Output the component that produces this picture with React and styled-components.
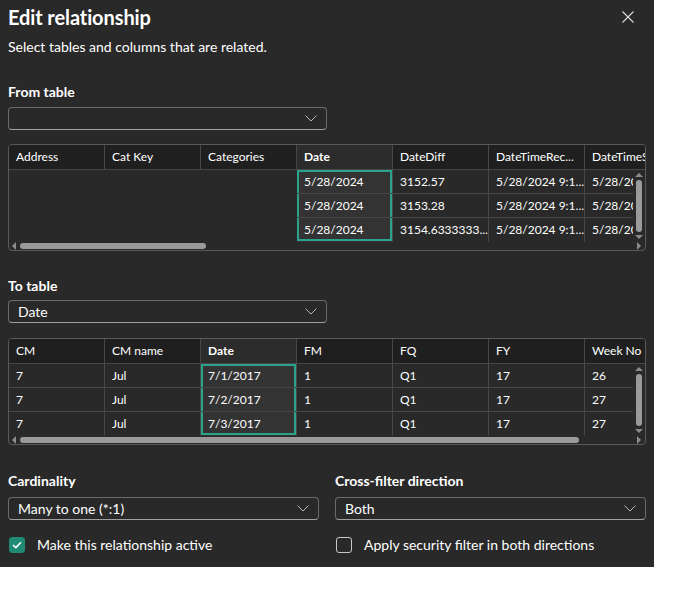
import React from "react";
import styled, { createGlobalStyle } from "styled-components";

const GlobalStyle = createGlobalStyle`
  body {
    margin: 0;
    background: #ffffff;
  }
`;

const TEAL = "#2aa38c";
const GRID = "#474747";

const Dialog = styled.div`
  width: 654px;
  height: 567px;
  box-sizing: border-box;
  padding: 0 8px 0 8px;
  background: #292929;
  color: #ffffff;
  font-family: "Lato", "Liberation Sans", sans-serif;
  display: flex;
  flex-direction: column;
`;

const TitleBar = styled.div`
  display: flex;
  justify-content: space-between;
  align-items: center;
  height: 34px;
`;

const Title = styled.h1`
  margin: 0;
  font-size: 20px;
  font-weight: 700;
  letter-spacing: -0.1px;
`;

const CloseButton = styled.button`
  width: 24px;
  height: 24px;
  margin-right: 6px;
  padding: 0;
  border: none;
  background: transparent;
  display: flex;
  align-items: center;
  justify-content: center;
`;

const Subtitle = styled.p`
  margin: 3px 0 0;
  font-size: 14px;
  line-height: 20px;
`;

const Label = styled.div`
  margin-top: ${(p) => p.$top || 0}px;
  font-size: 14px;
  line-height: 20px;
  font-weight: 700;
`;

const Select = styled.div`
  width: ${(p) => p.$width || 311}px;
  height: 23px;
  box-sizing: border-box;
  margin-top: ${(p) => p.$top || 5}px;
  padding: 0 9px;
  border: 1px solid #6a6a6a;
  border-bottom-color: #a0a0a0;
  border-radius: 4px;
  display: flex;
  align-items: center;
  justify-content: space-between;
  font-size: 14px;
`;

const TableFrame = styled.div`
  margin-top: ${(p) => p.$top || 15}px;
  width: 638px;
  box-sizing: border-box;
  border: 1px solid #5a5a5a;
  border-radius: 4px;
  overflow: hidden;
  display: grid;
  grid-template-columns: 1fr 12px;
  grid-template-rows: 25px 72px 8px;
  font-size: 12px;
`;

const HeaderRow = styled.div`
  grid-column: 1 / 3;
  display: flex;
  background: #1f1f1f;
  border-bottom: 1px solid ${GRID};
  overflow: hidden;
`;

const HeaderCell = styled.div`
  flex: 0 0 96px;
  box-sizing: border-box;
  padding: 0 0 2px 7px;
  border-right: 1px solid ${GRID};
  display: flex;
  align-items: center;
  white-space: nowrap;
  overflow: hidden;
  text-overflow: clip;
  font-weight: ${(p) => (p.$selected ? 700 : 400)};
  background: ${(p) => (p.$selected ? "#2c2c2c" : "transparent")};
`;

const Body = styled.div`
  grid-column: 1;
  overflow: hidden;
`;

const Row = styled.div`
  display: flex;
  height: 24px;
`;

const Cell = styled.div`
  flex: 0 0 96px;
  box-sizing: border-box;
  padding-left: 7px;
  display: flex;
  align-items: center;
  white-space: nowrap;
  overflow: hidden;
  border-right: 1px solid ${(p) => (p.$empty ? "transparent" : GRID)};
  border-bottom: 1px solid
    ${(p) => (p.$empty || p.$last ? "transparent" : GRID)};
  background: ${(p) => (p.$selected ? "#333333" : "transparent")};
  box-shadow: ${(p) =>
    p.$selected
      ? `inset 2px 0 ${TEAL}, inset -2px 0 ${TEAL}${
          p.$first ? `, inset 0 2px ${TEAL}` : ""
        }${p.$last ? `, inset 0 -2px ${TEAL}` : ""}`
      : "none"};
`;

const VScroll = styled.div`
  grid-column: 2;
  display: flex;
  flex-direction: column;
  align-items: center;
  justify-content: space-between;
  padding: 3px 0;
  box-sizing: border-box;
`;

const VThumb = styled.div`
  width: 6px;
  flex: 1;
  margin: 3px 0;
  border-radius: 3px;
  background: #9a9a9a;
`;

const HScroll = styled.div`
  grid-column: 1;
  display: flex;
  align-items: center;
  padding-left: 3px;
`;

const HThumb = styled.div`
  height: 6px;
  margin-left: 4px;
  border-radius: 3px;
  background: #9a9a9a;
`;

const Corner = styled.div`
  display: flex;
  align-items: center;
  justify-content: center;
`;

const Columns = styled.div`
  margin-top: ${(p) => p.$top || 0}px;
  display: grid;
  grid-template-columns: 311px 311px;
  column-gap: 16px;
`;

const Field = styled.div`
  display: flex;
  flex-direction: column;
`;

const CheckRow = styled.label`
  display: flex;
  align-items: center;
  gap: 12px;
  margin-left: 1px;
  font-size: 14px;
`;

const Box = styled.span`
  width: 16px;
  height: 16px;
  box-sizing: border-box;
  border-radius: 3px;
  border: 1px solid ${(p) => (p.$checked ? "#1f8b74" : "#c8c8c8")};
  background: ${(p) => (p.$checked ? "#1f8b74" : "transparent")};
  display: flex;
  align-items: center;
  justify-content: center;
`;

const Chevron = () => (
  <svg width="12" height="7" viewBox="0 0 12 7">
    <polyline points="0.5,0.5 6,6 11.5,0.5" fill="none" stroke="#b8b8b8" strokeWidth="1" />
  </svg>
);

const Arrow = ({ dir }) => {
  const pts = {
    left: "4,0 4,8 0,4",
    right: "0,0 0,8 4,4",
    up: "0,4 8,4 4,0",
    down: "0,0 8,0 4,4",
  }[dir];
  const vertical = dir === "up" || dir === "down";
  return (
    <svg width={vertical ? 8 : 4} height={vertical ? 4 : 8}>
      <polygon points={pts} fill="#8c8c8c" />
    </svg>
  );
};

const DataTable = ({ columns, rows, selected, thumb, top }) => (
  <TableFrame $top={top}>
    <HeaderRow>
      {columns.map((c, i) => (
        <HeaderCell key={c} $selected={i === selected}>
          {c}
        </HeaderCell>
      ))}
    </HeaderRow>
    <Body>
      {rows.map((r, ri) => (
        <Row key={ri}>
          {r.map((v, ci) => (
            <Cell
              key={ci}
              $empty={v === null}
              $selected={ci === selected}
              $first={ri === 0}
              $last={ri === rows.length - 1}
            >
              {v}
            </Cell>
          ))}
        </Row>
      ))}
    </Body>
    <VScroll>
      <Arrow dir="up" />
      <VThumb />
      <Arrow dir="down" />
    </VScroll>
    <HScroll>
      <Arrow dir="left" />
      <HThumb style={{ width: thumb }} />
    </HScroll>
    <Corner>
      <Arrow dir="right" />
    </Corner>
  </TableFrame>
);

const fromColumns = ["Address", "Cat Key", "Categories", "Date", "DateDiff", "DateTimeRec...", "DateTimeStamp"];
const fromRows = [
  [null, null, null, "5/28/2024", "3152.57", "5/28/2024 9:1...", "5/28/2024"],
  [null, null, null, "5/28/2024", "3153.28", "5/28/2024 9:1...", "5/28/2024"],
  [null, null, null, "5/28/2024", "3154.6333333...", "5/28/2024 9:1...", "5/28/2024"],
];

const toColumns = ["CM", "CM name", "Date", "FM", "FQ", "FY", "Week No"];
const toRows = [
  ["7", "Jul", "7/1/2017", "1", "Q1", "17", "26"],
  ["7", "Jul", "7/2/2017", "1", "Q1", "17", "27"],
  ["7", "Jul", "7/3/2017", "1", "Q1", "17", "27"],
];

const App = () => (
  <>
    <GlobalStyle />
    <Dialog>
      <TitleBar>
        <Title>Edit relationship</Title>
        <CloseButton aria-label="Close">
          <svg width="12" height="12" viewBox="0 0 12 12">
            <path d="M0.5 0.5 L11.5 11.5 M11.5 0.5 L0.5 11.5" stroke="#dcdcdc" strokeWidth="1.1" />
          </svg>
        </CloseButton>
      </TitleBar>
      <Subtitle>Select tables and columns that are related.</Subtitle>

      <Label $top={25}>From table</Label>
      <Select $width={319}>
        <span />
        <Chevron />
      </Select>
      <DataTable columns={fromColumns} rows={fromRows} selected={3} thumb={186} top={14} />

      <Label $top={25}>To table</Label>
      <Select $width={319} $top={4}>
        <span>Date</span>
        <Chevron />
      </Select>
      <DataTable columns={toColumns} rows={toRows} selected={2} thumb={559} top={15} />

      <Columns $top={26}>
        <Field>
          <Label>Cardinality</Label>
          <Select $top={6}>
            <span>Many to one (*:1)</span>
            <Chevron />
          </Select>
        </Field>
        <Field>
          <Label>Cross-filter direction</Label>
          <Select $top={6}>
            <span>Both</span>
            <Chevron />
          </Select>
        </Field>
      </Columns>

      <Columns $top={16}>
        <CheckRow>
          <Box $checked>
            <svg width="10" height="8" viewBox="0 0 10 8">
              <polyline points="1,4 3.8,6.6 9,1.2" fill="none" stroke="#fff" strokeWidth="1.5" />
            </svg>
          </Box>
          Make this relationship active
        </CheckRow>
        <CheckRow>
          <Box />
          Apply security filter in both directions
        </CheckRow>
      </Columns>
    </Dialog>
  </>
);

export default App;
